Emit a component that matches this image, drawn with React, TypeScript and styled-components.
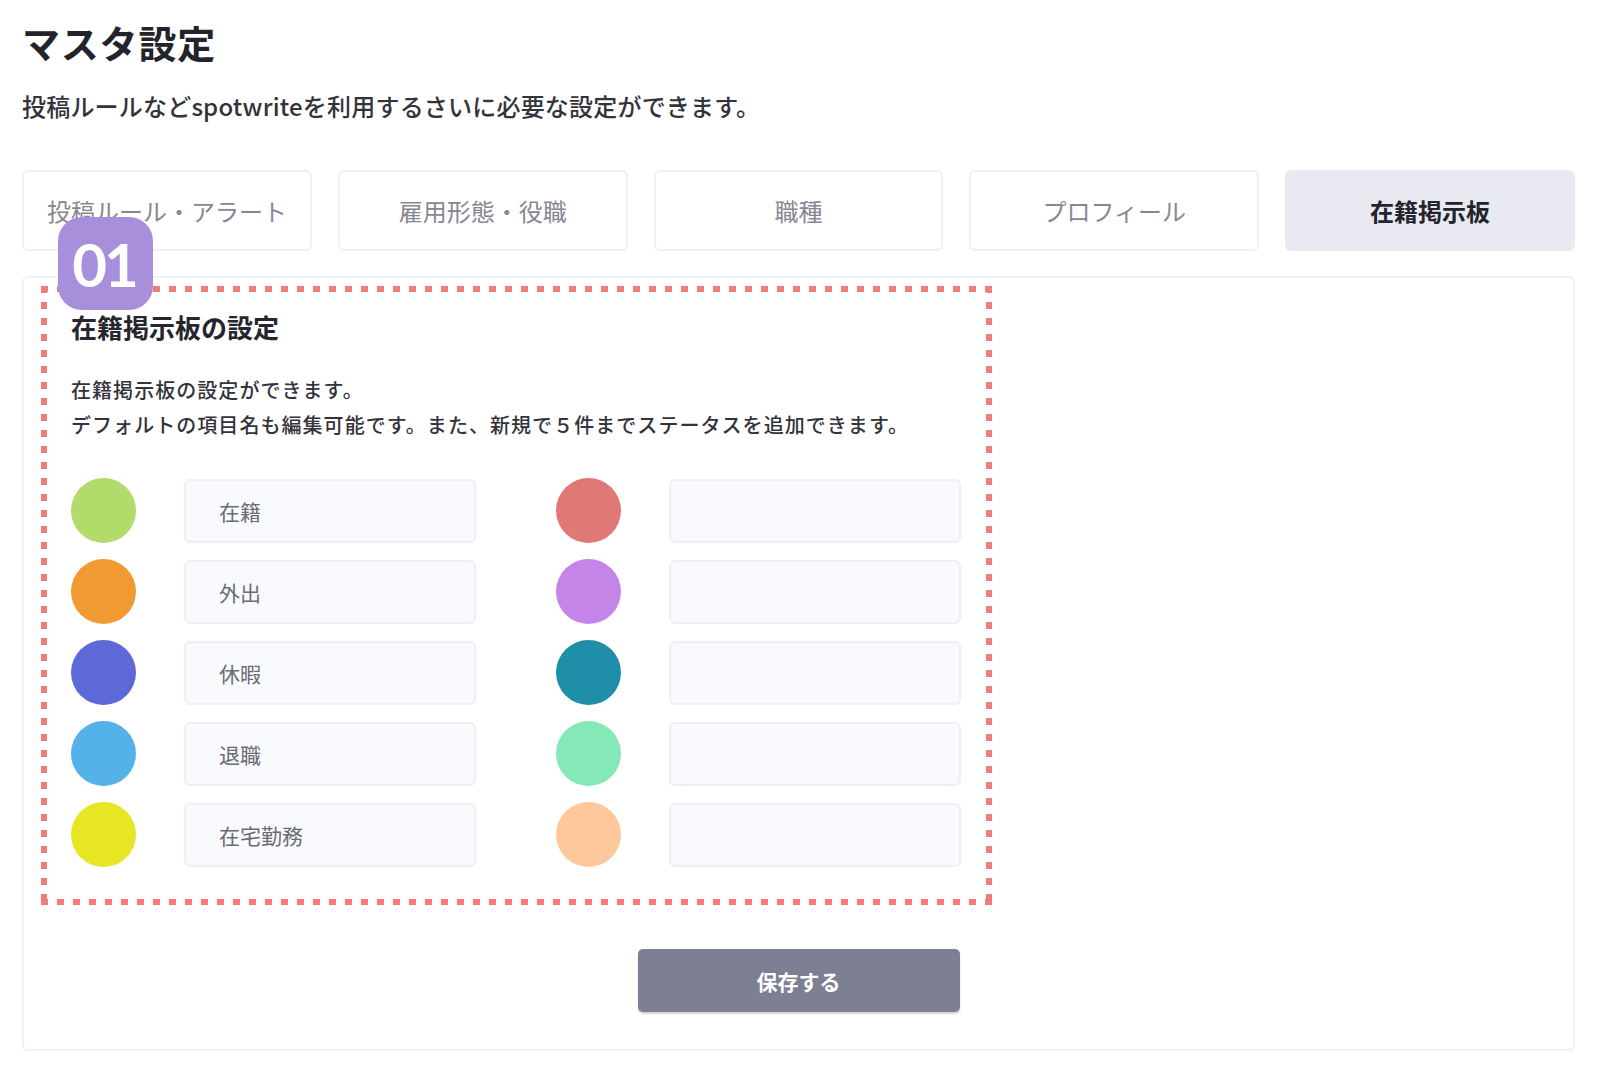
import React from "react";
import styled, { createGlobalStyle } from "styled-components";

const GlobalStyle = createGlobalStyle`
  html, body {
    margin: 0;
    padding: 0;
    background: #ffffff;
  }
  body {
    font-family: "Noto Sans CJK JP", "Noto Sans", sans-serif;
    color: #222;
  }
  * { box-sizing: border-box; }
`;

const Page = styled.div`
  width: 1600px;
  padding: 18px 25px 0 22px;
`;

const Title = styled.h1`
  margin: 0;
  font-size: 38px;
  line-height: 48px;
  font-weight: 700;
  color: #23232b;
  letter-spacing: 0.8px;
`;

const Lead = styled.p`
  margin: 24px 0 0;
  font-size: 24px;
  line-height: 32px;
  color: #33333b;
  font-weight: 500;
  letter-spacing: 0.2px;
`;

const Tabs = styled.div`
  margin-top: 48px;
  display: grid;
  grid-template-columns: repeat(5, 1fr);
  gap: 26px;
`;

const Tab = styled.button<{ $active?: boolean }>`
  height: 81px;
  border-radius: 6px;
  border: 2px solid ${(p) => (p.$active ? "#e9e9f1" : "#efeff4")};
  background: ${(p) => (p.$active ? "#e9e9f1" : "#ffffff")};
  color: ${(p) => (p.$active ? "#24242c" : "#878793")};
  font-family: "Noto Sans CJK JP", sans-serif;
  font-size: 24px;
  font-weight: ${(p) => (p.$active ? 700 : 400)};
  display: flex;
  align-items: center;
  justify-content: center;
  padding: 0;
  cursor: pointer;
`;

const Card = styled.section`
  margin-top: 25px;
  border: 2px solid #f0f0f5;
  border-radius: 6px;
  padding: 8px 0 37px 17px;
  display: flex;
  flex-direction: column;
  box-shadow: 0 1px 2px rgba(120, 120, 150, 0.08);
`;

const dash = "#f47b7b";

const Highlight = styled.div`
  position: relative;
  width: 951px;
  padding: 24px 25px 38px 30px;
  background:
    repeating-linear-gradient(90deg, ${dash} 0 7px, transparent 7px 16px) top left / 100% 6px no-repeat,
    repeating-linear-gradient(90deg, ${dash} 0 7px, transparent 7px 16px) bottom left / 100% 6px no-repeat,
    repeating-linear-gradient(180deg, ${dash} 0 7px, transparent 7px 16px) top left / 6px 100% no-repeat,
    repeating-linear-gradient(180deg, ${dash} 0 7px, transparent 7px 16px) top right / 6px 100% no-repeat;
`;

const Badge = styled.div`
  position: absolute;
  left: 17px;
  top: -69px;
  width: 95px;
  height: 93px;
  border-radius: 24px;
  background: #a78fdc;
  color: #ffffff;
  font-family: "Lato", "Inter", sans-serif;
  font-weight: 700;
  font-size: 60px;
  letter-spacing: -3px;
  display: flex;
  align-items: center;
  justify-content: center;
  padding-right: 3px;
`;

const SectionTitle = styled.h2`
  margin: 0;
  font-size: 26px;
  line-height: 34px;
  font-weight: 700;
  color: #26262e;
`;

const Desc = styled.p`
  margin: 28px 0 0;
  font-size: 20px;
  line-height: 35px;
  color: #33333b;
  font-weight: 500;
  letter-spacing: 1.05px;
`;

const StatusGrid = styled.div`
  margin-top: 36px;
  display: grid;
  grid-template-columns: 405px 405px;
  column-gap: 80px;
  row-gap: 16px;
  grid-auto-flow: column;
  grid-template-rows: repeat(5, 65px);
`;

const StatusRow = styled.div`
  display: flex;
  align-items: center;
  gap: 48px;
`;

const Dot = styled.span<{ $color: string }>`
  flex: none;
  width: 65px;
  height: 65px;
  border-radius: 50%;
  background: ${(p) => p.$color};
`;

const NameInput = styled.input`
  width: 292px;
  height: 64px;
  border: 2px solid #eeeff5;
  border-radius: 6px;
  background: #f9fafd;
  padding: 0 0 0 33px;
  font-family: "Noto Sans CJK JP", sans-serif;
  font-size: 21px;
  color: #6b6b76;
  outline: none;
`;

const SaveButton = styled.button`
  align-self: center;
  margin: 44px 0 0 -17px;
  width: 322px;
  height: 63px;
  border: none;
  border-radius: 5px;
  background: #7d7f93;
  color: #ffffff;
  font-family: "Noto Sans CJK JP", sans-serif;
  font-size: 21px;
  font-weight: 700;
  box-shadow: 0 2px 2px rgba(80, 80, 100, 0.25);
  cursor: pointer;
`;

const tabs = ["投稿ルール・アラート", "雇用形態・役職", "職種", "プロフィール", "在籍掲示板"];

const statuses: { color: string; name: string }[] = [
  { color: "#b2db6c", name: "在籍" },
  { color: "#f09a31", name: "外出" },
  { color: "#5e69d8", name: "休暇" },
  { color: "#55b2e8", name: "退職" },
  { color: "#e6e625", name: "在宅勤務" },
  { color: "#e07975", name: "" },
  { color: "#c585e8", name: "" },
  { color: "#1e8ea9", name: "" },
  { color: "#84e9b7", name: "" },
  { color: "#fec89c", name: "" },
];

export default function App() {
  return (
    <>
      <GlobalStyle />
      <Page>
        <Title>マスタ設定</Title>
        <Lead>投稿ルールなどspotwriteを利用するさいに必要な設定ができます。</Lead>
        <Tabs>
          {tabs.map((t, i) => (
            <Tab key={t} $active={i === tabs.length - 1}>
              {t}
            </Tab>
          ))}
        </Tabs>
        <Card>
          <Highlight>
            <Badge>01</Badge>
            <SectionTitle>在籍掲示板の設定</SectionTitle>
            <Desc>
              在籍掲示板の設定ができます。
              <br />
              デフォルトの項目名も編集可能です。また、新規で５件までステータスを追加できます。
            </Desc>
            <StatusGrid>
              {statuses.map((s, i) => (
                <StatusRow key={i}>
                  <Dot $color={s.color} />
                  <NameInput readOnly value={s.name} />
                </StatusRow>
              ))}
            </StatusGrid>
          </Highlight>
          <SaveButton>保存する</SaveButton>
        </Card>
      </Page>
    </>
  );
}
